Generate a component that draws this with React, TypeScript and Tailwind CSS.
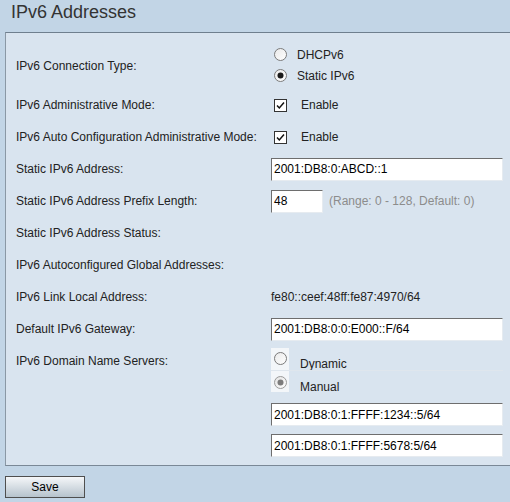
import React from "react";

function Radio({ checked, disabled }: { checked?: boolean; disabled?: boolean }) {
  const ring = disabled ? "#9a9a9a" : "#7a7a7a";
  const dot = disabled ? "#7c7c7c" : "#1a1a1a";
  return (
    <svg width="13" height="13" viewBox="0 0 13 13" className="shrink-0">
      <defs>
        <linearGradient id={disabled ? "rg-d" : "rg"} x1="0" y1="0" x2="1" y2="1">
          <stop offset="0" stopColor={disabled ? "#e2e2e2" : "#e9e9e9"} />
          <stop offset="1" stopColor="#ffffff" />
        </linearGradient>
      </defs>
      <circle cx="6.5" cy="6.5" r="6" fill={`url(#${disabled ? "rg-d" : "rg"})`} stroke={ring} strokeWidth="1" />
      {checked && <circle cx="6.5" cy="6.5" r="3" fill={dot} />}
    </svg>
  );
}

function Checkbox() {
  return (
    <svg width="13" height="13" viewBox="0 0 13 13" className="shrink-0">
      <rect x="0.5" y="0.5" width="12" height="12" fill="#ffffff" stroke="#333333" />
      <path d="M3 6.5 L5.3 9 L10 3.6" fill="none" stroke="#111111" strokeWidth="1.5" />
    </svg>
  );
}

function TextBox({ value, w }: { value: string; w: string }) {
  return (
    <div
      className={`${w} h-[23px] bg-white border border-t-[#6e6e6e] border-l-[#6e6e6e] border-r-[#e6ebf0] border-b-[#e6ebf0] pl-[2px] flex items-center text-[12px] text-black`}
    >
      {value}
    </div>
  );
}

function Row({ label, children }: { label: string; children?: React.ReactNode }) {
  return (
    <div className="flex h-[32px] items-center">
      <div className="w-[255px] shrink-0">{label}</div>
      <div className="flex items-center">{children}</div>
    </div>
  );
}

export default function App() {
  return (
    <div
      className="w-[510px] h-[502px] overflow-hidden bg-[#c2d5e6] text-[12px] text-[#222]"
      style={{ fontFamily: '"Liberation Sans", Arial, sans-serif' }}
    >
      <div className="h-[32px] pl-[11px] pt-[1px] text-[18px] leading-[22px] text-[#333]">
        IPv6 Addresses
      </div>

      <div className="ml-[5px] w-[520px] bg-[#d9e4ef] border-t border-l border-b border-t-[#6f7f8e] border-l-[#8a98a5] border-b-[#7a8896] pl-[10px] pt-[9px] pb-[8px]">
        <div className="flex h-[47px] items-center">
          <div className="w-[255px] shrink-0">IPv6 Connection Type:</div>
          <div className="flex flex-col -mt-[1px]">
            <div className="flex h-[21px] items-center pl-[3px] gap-[10px]">
              <Radio />
              <span>DHCPv6</span>
            </div>
            <div className="flex h-[21px] items-center pl-[3px] gap-[10px]">
              <Radio checked />
              <span>Static IPv6</span>
            </div>
          </div>
        </div>

        <Row label="IPv6 Administrative Mode:">
          <div className="pl-[3px] flex items-center gap-[14px]">
            <Checkbox />
            <span>Enable</span>
          </div>
        </Row>
        <Row label="IPv6 Auto Configuration Administrative Mode:">
          <div className="pl-[3px] flex items-center gap-[14px]">
            <Checkbox />
            <span>Enable</span>
          </div>
        </Row>
        <Row label="Static IPv6 Address:">
          <TextBox value="2001:DB8:0:ABCD::1" w="w-[232px]" />
        </Row>
        <Row label="Static IPv6 Address Prefix Length:">
          <TextBox value="48" w="w-[52px]" />
          <span className="ml-[6px] text-[#8c8c8c]">(Range: 0 - 128, Default: 0)</span>
        </Row>
        <Row label="Static IPv6 Address Status:" />
        <Row label="IPv6 Autoconfigured Global Addresses:" />
        <Row label="IPv6 Link Local Address:">
          <span>fe80::ceef:48ff:fe87:4970/64</span>
        </Row>
        <Row label="Default IPv6 Gateway:">
          <TextBox value="2001:DB8:0:0:E000::F/64" w="w-[232px]" />
        </Row>

        <div className="flex">
          <div className="w-[255px] shrink-0 h-[32px] flex items-center">IPv6 Domain Name Servers:</div>
          <div className="flex flex-col pt-[3px]">
            <div className="flex h-[22px] items-start">
              <div className="w-[18px] h-[22px] bg-[#f3f6f9] flex items-start justify-center pt-[4px]">
                <Radio />
              </div>
              <span className="ml-[11px] mt-[9px] leading-[14px]">Dynamic</span>
            </div>
            <div className="flex h-[22px] items-start border-t border-[#dfe6ed]">
              <div className="w-[18px] h-[21px] bg-[#f3f6f9] flex items-start justify-center pt-[5px]">
                <Radio checked disabled />
              </div>
              <span className="ml-[11px] mt-[9px] leading-[14px]">Manual</span>
            </div>
            <div className="mt-[11px]">
              <TextBox value="2001:DB8:0:1:FFFF:1234::5/64" w="w-[232px]" />
            </div>
            <div className="mt-[8px]">
              <TextBox value="2001:DB8:0:1:FFFF:5678:5/64" w="w-[232px]" />
            </div>
          </div>
        </div>
      </div>

      <div className="pl-[5px] pt-[10px]">
        <button
          type="button"
          className="w-[80px] h-[22px] border border-[#4f4f4f] bg-gradient-to-b from-[#f5f7f9] to-[#b6c3cd] text-[12px] text-black"
        >
          Save
        </button>
      </div>
    </div>
  );
}
